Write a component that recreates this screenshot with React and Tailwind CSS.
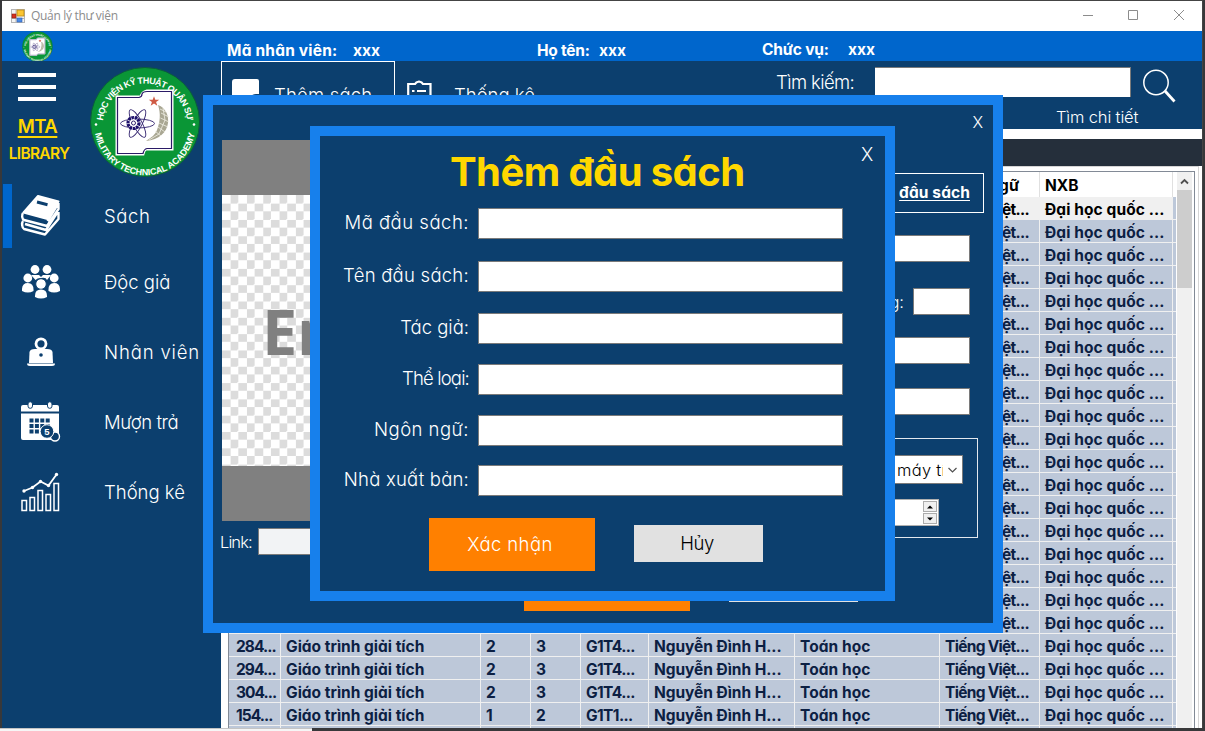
import React from "react";

const GOTHIC = "font-['Inter','Open_Sans',sans-serif] [font-feature-settings:'cv11','ss03']";

const GRID =
  "grid grid-cols-[52px_200px_50px_50px_68px_146px_145px_100px_133px_3px] w-[947px]";

const TRACKS = [
  "tracking-[-0.95px]",
  "tracking-[0px]",
  "",
  "",
  "tracking-[-0.6px]",
  "tracking-[-0.05px]",
  "tracking-[0.05px]",
  "tracking-[-0.7px]",
  "tracking-[0.1px]",
];

const VISIBLE_ROWS = [
  ["284...", "Giáo trình giải tích", "2", "3", "G1T4...", "Nguyễn Đình H...", "Toán học"],
  ["294...", "Giáo trình giải tích", "2", "3", "G1T4...", "Nguyễn Đình H...", "Toán học"],
  ["304...", "Giáo trình giải tích", "2", "3", "G1T4...", "Nguyễn Đình H...", "Toán học"],
  ["154...", "Giáo trình giải tích", "1", "2", "G1T1...", "Nguyễn Đình H...", "Toán học"],
];
const EMPTY_ROW = ["", "", "", "", "", "", ""];
const LANGUAGE_AND_PUBLISHER = ["Tiếng Việt...", "Đại học quốc ..."];
const ROWS = [
  ...[...Array(19).fill(EMPTY_ROW), ...VISIBLE_ROWS].map((row) => [...row, ...LANGUAGE_AND_PUBLISHER]),
  [...EMPTY_ROW, "", ""],
];

function TitleBar() {
  return (
    <div className="flex h-[30px] shrink-0 items-center bg-white pl-[9px]">
      <svg width="14" height="14" viewBox="0 0 14 14">
        <rect x="0.5" y="0.5" width="13" height="13" fill="#f4f4f4" stroke="#b5b5b5" />
        <path d="M5 0V14M0 9.5H14" stroke="#b5b5b5" />
        <rect x="1" y="5" width="4" height="4" fill="#d6301e" stroke="#8d1a10" strokeWidth=".6" />
        <rect x="6" y="1" width="7" height="6" fill="#fbc531" stroke="#b98712" strokeWidth=".8" />
        <rect x="6" y="9" width="5" height="4" fill="#4a8be8" stroke="#2e5fae" strokeWidth=".6" />
      </svg>
      <span className="ml-[6px] font-['Open_Sans',sans-serif] text-[12px] leading-4 tracking-[-0.32px] text-[#8c8c8c]">
        Quản lý thư viện
      </span>
      <svg className="ml-auto" width="120" height="30" viewBox="0 0 120 30" fill="none" stroke="#8c8c8c">
        <path d="M1 14.5H11M46.5 9.5H55.5V18.5H46.5ZM92 9L102 19M102 9L92 19" />
      </svg>
    </div>
  );
}

function Emblem({ size, className }) {
  return (
    <svg className={className} width={size} height={size} viewBox="0 0 112 112">
      <defs>
        <path id="arcTop" d="M13.5 60A42.5 42.5 0 1 1 98.5 60" />
        <path id="arcBottom" d="M5.6 62A50.5 50.5 0 0 0 106.4 62" />
      </defs>
      <circle cx="56" cy="56" r="54.500" fill="#0a9636" stroke="#0b5c3c" strokeWidth="1" />
      <g fill="#fff" fontFamily="Liberation Sans, sans-serif" fontWeight="700" fontSize="9">
        <text>
          <textPath href="#arcTop" startOffset="50%" textAnchor="middle" textLength="123">
            HỌC VIỆN KỸ THUẬT QUÂN SỰ
          </textPath>
        </text>
        <text>
          <textPath href="#arcBottom" startOffset="50%" textAnchor="middle" textLength="141">
            MILITARY TECHNICAL ACADEMY
          </textPath>
        </text>
      </g>
      <circle cx="7" cy="58.500" r="1.300" fill="#fff" />
      <circle cx="105" cy="58.500" r="1.300" fill="#fff" />
      <path
        d="M28 31H52Q53 26 58 25H83V83H57Q55 84 54 88H28Z"
        fill="#fff"
        stroke="#fff"
        strokeWidth="3"
      />
      <path d="M28.5 31.5H50Q53 31 53 28Q54 25.500 58 25.500H82.500V82.500H58Q55 83 54 87.500H28.500Z" fill="#fff" stroke="#2a1a66" strokeWidth="1.2" />
      <g fill="none" stroke="#33246f" strokeWidth="0.9">
        <ellipse cx="48.500" cy="57.500" rx="17" ry="4.500" />
        <ellipse cx="48.500" cy="57.500" rx="15.500" ry="4.500" transform="rotate(62 48.500 57.500)" />
        <ellipse cx="48.500" cy="57.500" rx="15.500" ry="4.500" transform="rotate(-62 48.500 57.500)" />
      </g>
      <circle cx="44.500" cy="57" r="5.500" fill="#fff" stroke="#1d0f6b" strokeWidth="3.200" strokeDasharray="2.600 0.700" />
      <circle cx="44.500" cy="57" r="2" fill="none" stroke="#33246f" />
      <path
        d="M65 30.200L66.300 33.800H70.200L67.100 36.100L68.300 39.800L65 37.600L61.700 39.800L62.900 36.100L59.800 33.800H63.700Z"
        fill="#cf5a44"
      />
      <path
        d="M69 39C77 42 80 50 79 57C78 66 70 74 57 75C63 71 66 69 68 64C71 56 72 48 69 39Z"
        fill="#a9a793"
      />
      <path
        d="M71 43L77 46M72 47L80 51M71.500 52L80 56M70 57L79 61M69 61L76 66M66 65L72 70M74 42L76 54L70 68L60 74"
        fill="none"
        stroke="#f1f0e6"
        strokeWidth=".8"
      />
    </svg>
  );
}

function InfoBar() {
  return (
    <div className={`${GOTHIC} flex h-[30px] shrink-0 items-center bg-[#0066cc] text-[15.500px] font-bold leading-5 text-white`}>
      <Emblem size={31} className="ml-5 shrink-0" />
      <span className="ml-[174px] w-[126px] whitespace-nowrap pt-[9px] tracking-[0.2px]">Mã nhân viên:</span>
      <span className="w-[184px] pt-[9px]">xxx</span>
      <span className="w-[62px] whitespace-nowrap pt-[9px] tracking-[-0.25px]">Họ tên:</span>
      <span className="w-[163px] pt-[9px]">xxx</span>
      <span className="w-[86px] whitespace-nowrap pt-[7px] tracking-[-0.2px]">Chức vụ:</span>
      <span className="pt-[7px]">xxx</span>
    </div>
  );
}

function BooksIcon() {
  return (
    <svg width="42" height="42" viewBox="0 0 42 42">
      <path d="M18 1L38.500 6.500L27.500 24L3.500 17.500Z" fill="#fff" stroke="#fff" strokeWidth="2" strokeLinejoin="round" />
      <path d="M17 7L27.500 9.800" stroke="#0c3f6e" strokeWidth="3" />
      <path
        d="M3 18C1.500 20 2 24 4 25L27 31L38.500 14V8M27.500 26L38 9M3 26C1.500 28 2 33 4 34L25 39.500L38.500 24V17M5 29L26 35L37 18"
        fill="none"
        stroke="#fff"
        strokeWidth="2.400"
        strokeLinejoin="round"
      />
    </svg>
  );
}

function PeopleIcon() {
  return (
    <svg width="38" height="34" viewBox="0 0 38 34" fill="#fff">
      <circle cx="13" cy="4.500" r="4.400" />
      <circle cx="25" cy="4.500" r="4.400" />
      <path d="M9 10H17L19 12L21 10H29L25 15Q24 12 19 13Q15 13 13.500 15Z" />
      <circle cx="5.800" cy="13" r="4.400" />
      <circle cx="32.200" cy="13" r="4.400" />
      <path d="M0 26Q-.5 18 5.800 18Q12 18 11.500 26Q6 29 0 26ZM26.500 26Q26 18 32.200 18Q38.500 18 38 26Q32 29 26.500 26Z" />
      <circle cx="19" cy="19" r="5.300" fill="#fff" stroke="#0c3f6e" strokeWidth="1" />
      <path d="M13 32Q12.500 24.500 19 24.500Q25.500 24.500 25 32Q19 35 13 32Z" />
    </svg>
  );
}

function StaffIcon() {
  return (
    <svg width="28" height="30" viewBox="0 0 28 30">
      <circle cx="14" cy="6.800" r="5" fill="none" stroke="#fff" strokeWidth="2.800" />
      <path d="M2 26L2.500 15Q3 12 8 12H20Q25 12 25.500 15L26 26Z" fill="#fff" />
      <path d="M0 26.500H28Q28 29 25 29H3Q0 29 0 26.500Z" fill="#fff" />
      <circle cx="14" cy="18" r="1.800" fill="#0c3f6e" />
    </svg>
  );
}

function CalendarIcon() {
  return (
    <svg width="40" height="42" viewBox="0 0 40 42">
      <path d="M2 4H36Q38 4 38 6V10.500H0V6Q0 4 2 4ZM0 12.500H38V37Q38 39 36 39H2Q0 39 0 37Z" fill="#fff" />
      <g fill="#fff" stroke="#0c3f6e">
        <rect x="7" y=".8" width="4.500" height="6.500" rx="2.200" />
        <rect x="26.500" y=".8" width="4.500" height="6.500" rx="2.200" />
      </g>
      <path d="M8.500 19.500H30M8.500 25H30M8.500 30.500H22" stroke="#0c3f6e" strokeWidth="4" strokeDasharray="4 1.400" />
      <circle cx="34" cy="35.500" r="4.500" fill="#0c3f6e" stroke="#fff" strokeWidth="1.400" />
      <circle cx="26" cy="30.500" r="6.800" fill="#0c3f6e" stroke="#fff" strokeWidth="1" />
      <text x="26" y="34" textAnchor="middle" fontSize="9.500" fontWeight="700" fontFamily="Liberation Sans, sans-serif" fill="#fff">
        5
      </text>
    </svg>
  );
}

function ChartIcon() {
  return (
    <svg width="40" height="40" viewBox="0 0 40 40" fill="none" stroke="#fff" strokeWidth="1.500">
      <path d="M1 28.500H5.500V38.500H1ZM9 25.500H13.500V38.500H9ZM17 18.500H21.500V38.500H17ZM25 22.500H29.500V38.500H25ZM33 11.500H37.500V38.500H33Z" />
      <path d="M3 19L11.500 15.500L19.500 9.500L27.500 13.500L35.500 2.500" strokeWidth="1.800" />
      <g fill="#fff" stroke="none">
        <circle cx="3" cy="19" r="1.700" />
        <circle cx="11.500" cy="15.500" r="1.700" />
        <circle cx="19.500" cy="9.500" r="1.700" />
        <circle cx="27.500" cy="13.500" r="1.700" />
        <circle cx="35.500" cy="2.500" r="1.700" />
      </g>
    </svg>
  );
}

function NavItem({ icon, label, active, className, track }) {
  return (
    <div className={`flex items-center ${className}`}>
      <div className={`ml-px h-16 w-[9px] shrink-0 ${active ? "bg-[#0066cc]" : ""}`} />
      <div className="flex w-[58px] shrink-0 justify-center">{icon}</div>
      <span className={`ml-[34px] whitespace-nowrap text-[18.500px] font-light leading-6 text-white ${track}`}>{label}</span>
    </div>
  );
}

function Sidebar() {
  return (
    <div className={`${GOTHIC} flex w-[219px] shrink-0 flex-col bg-[#0c3f6e]`}>
      <div className="flex h-[123px] shrink-0">
        <div className="flex w-[70px] flex-col items-center">
          <div className="mt-[12px] flex w-[38px] flex-col gap-2">
            <div className="h-[4px] bg-white" />
            <div className="h-[4px] bg-white" />
            <div className="h-[4px] bg-white" />
          </div>
          <div className="ml-px mt-[13px] text-[18.500px] font-semibold leading-6 tracking-[-0.5px] text-[#ffd700] underline decoration-2 underline-offset-[3px]">
            MTA
          </div>
          <div className="ml-[4px] mt-[6px] text-[15.500px] font-semibold leading-5 tracking-[-0.7px] text-[#ffd700]">LIBRARY</div>
        </div>
        <Emblem size={112} className="ml-[17px] mt-[5px] shrink-0" />
      </div>
      <NavItem active icon={<BooksIcon />} label="Sách" className="h-16" track="tracking-[0.6px]" />
      <NavItem icon={<PeopleIcon />} label="Độc giả" className="mt-[1px] h-[66px]" track="" />
      <NavItem icon={<StaffIcon />} label="Nhân viên" className="mt-[4px] h-[66px]" track="tracking-[0.85px]" />
      <NavItem icon={<CalendarIcon />} label="Mượn trả" className="mt-[4px] h-[66px]" track="tracking-[-0.4px]" />
      <NavItem icon={<ChartIcon />} label="Thống kê" className="mt-[4px] h-[66px]" track="" />
    </div>
  );
}

function Toolbar() {
  return (
    <div className={`${GOTHIC} flex h-[68px] shrink-0 bg-[#0c3f6e] font-light text-white`}>
      <div className="flex h-[68px] w-[174px] border border-white pl-[10px] pt-[17px]">
        <svg width="28" height="30" viewBox="0 0 28 30">
          <path d="M3 0H25Q27 0 27 2V15H24Q20 15 19 18V28H0V3Q0 0 3 0Z" fill="#fff" />
        </svg>
        <span className="ml-[14px] mt-[4px] text-[18.500px] leading-6 tracking-[0.2px]">Thêm sách</span>
      </div>
      <div className="flex w-[374px] pl-[12px] pt-[19px]">
        <svg width="26" height="30" viewBox="0 0 26 30" fill="none" stroke="#fff" strokeWidth="2.200">
          <path d="M1.200 28V4H8Q9 2 12 1.500Q15 2 16 4H23.500V28Z" />
          <path d="M5 11H7.500M10 11H19M5 17H7.500M10 17H19" />
        </svg>
        <span className="ml-[21px] mt-[3px] text-[18.500px] leading-6">Thống kê</span>
      </div>
      <div className="flex">
        <span className="ml-[7px] mt-[9px] w-[99px] text-[18.500px] leading-6 tracking-[-0.6px]">Tìm kiếm:</span>
        <div>
          <div className="mt-[6px] flex">
            <div className="h-[30px] w-[256px] border-r border-t border-[#7a7a7a] bg-white" />
            <svg className="ml-[11px] mt-[1px]" width="36" height="36" viewBox="0 0 36 36" fill="none" stroke="#fff">
              <circle cx="14" cy="14.500" r="12.200" strokeWidth="1.500" />
              <path d="M23 23L32.500 33.500" strokeWidth="2.800" />
            </svg>
          </div>
          <div className="ml-[181px] mt-[1px] text-[16.500px] leading-6 tracking-[-0.15px]">Tìm chi tiết</div>
        </div>
      </div>
    </div>
  );
}

function BookTable() {
  return (
    <div className={`${GOTHIC} ml-[7px] mt-[4px] flex h-[600px] w-[967px] border border-[#828a96] bg-white text-[15.500px] font-bold`}>
      <div className="shrink-0">
        <div className={`${GRID} h-[25px] bg-white leading-[27px] text-black`}>
          <div className="border-r border-[#e0e0e0]" />
          <div className="border-r border-[#e0e0e0]" />
          <div className="border-r border-[#e0e0e0]" />
          <div className="border-r border-[#e0e0e0]" />
          <div className="border-r border-[#e0e0e0]" />
          <div className="border-r border-[#e0e0e0]" />
          <div className="border-r border-[#e0e0e0]" />
          <div className="h-[25px] border-r border-[#e0e0e0] pl-[5px]">Ngôn ngữ</div>
          <div className="h-[25px] border-r border-[#e0e0e0] pl-[5px]">NXB</div>
        </div>
        {ROWS.map((row, r) => (
          <div key={r} className={`${GRID} h-[23px] ${r === 0 ? "bg-[#f0f0f0] text-black" : "bg-[#bdc8d9] text-[#0c2043]"}`}>
            {row.map((cell, c) => (
              <div
                key={c}
                className={`h-[23px] whitespace-nowrap border-b border-r border-[#f0f0f0] leading-[25px] ${c === 0 ? "pl-[7px]" : "pl-[5px]"} ${TRACKS[c]}`}
              >
                {cell}
              </div>
            ))}
            <div className="h-[23px] border-b border-[#f0f0f0] bg-[#bdc8d9]" />
          </div>
        ))}
      </div>
      <div className="ml-px w-[15px] bg-[#f0f0f0]">
        <svg width="15" height="18" viewBox="0 0 15 18" fill="none" stroke="#505050" strokeWidth="1.800">
          <path d="M4 11.500L7.500 8L11 11.500" />
        </svg>
        <div className="h-[98px] bg-[#cdcdcd]" />
      </div>
    </div>
  );
}

function Field({ label, className, track }) {
  return (
    <div className={`flex h-[31px] ${className}`}>
      <div className="mr-[9px] flex w-[149px] justify-end">
        <span className={`whitespace-nowrap text-[18.500px] font-light leading-[28px] text-white ${track}`}>{label}</span>
      </div>
      <div className="w-[365px] border border-[#7a7a7a] bg-white" />
    </div>
  );
}

function AddBookDialog() {
  return (
    <div className={`${GOTHIC} absolute left-[203px] top-[95px] flex h-[538px] w-[800px] flex-col border-[10px] border-[#1780ec] bg-[#0c3f6e] text-white`}>
      <div className="flex h-[35px] justify-end pr-[10px] pt-[7px] text-[16px] font-light leading-5">X</div>
      <div className="flex justify-between pl-[9px]">
        <div>
          <div className="h-[381px] w-[280px] bg-[#808080] pt-[55px]">
            <div className="h-[271px] bg-[conic-gradient(#dcdcdc_25%,#fff_0_50%,#dcdcdc_0_75%,#fff_0)] bg-[length:16.320px_16.320px] pl-[40px] pt-[91px] font-['Noto_Sans',sans-serif] text-[63px] font-bold leading-[90px] text-[#808080]">
              Em
            </div>
          </div>
          <div className="mt-[7px] flex h-[27px]">
            <span className="-ml-[2px] w-[38px] whitespace-nowrap text-[16.500px] font-light leading-[28px] tracking-[-0.9px]">Link:</span>
            <div className="w-[200px] border border-[#7a7a7a] bg-[#f2f3f5]" />
          </div>
        </div>
        <div className="mt-[33px] flex w-[220px] flex-col items-end pr-[9px]">
          <div className="h-[40px] w-[200px] whitespace-nowrap border border-white pr-[13px] text-right text-[15.500px] font-bold leading-[38px] tracking-[0.1px] underline decoration-1 underline-offset-[2px]">
            đầu sách
          </div>
          <div className="mr-[14px] mt-[22px] h-[27px] w-[150px] border border-[#7a7a7a] bg-white" />
          <div className="mr-[14px] mt-[26px] flex h-[27px]">
            <span className="mr-[9px] text-[16.500px] font-light leading-[28px]">g:</span>
            <div className="w-[57px] border border-[#7a7a7a] bg-white" />
          </div>
          <div className="mr-[14px] mt-[22px] h-[27px] w-[150px] border border-[#7a7a7a] bg-white" />
          <div className="mr-[14px] mt-[24px] h-[27px] w-[150px] border border-[#7a7a7a] bg-white" />
          <div className="mr-[6px] mt-[23px] flex h-[100px] w-[190px] flex-col items-end border border-[#e3e8ee] pr-[14px] pt-[16px]">
            <div className="flex h-[29px] w-[130px] items-center border border-[#7a7a7a] bg-white">
              <span className="ml-[63px] w-[46px] overflow-hidden whitespace-nowrap text-[16.500px] font-light leading-6 tracking-[0.3px] text-black">
                máy tính
              </span>
              <svg className="ml-[4px]" width="11" height="8" viewBox="0 0 11 8" fill="none" stroke="#505050" strokeWidth="1.200">
                <path d="M1.500 2L5.500 6L9.500 2" />
              </svg>
            </div>
            <div className="mr-[24px] mt-[15px] flex h-[27px] w-[100px] justify-end border border-[#b0b0b0] bg-white p-px">
              <div className="flex w-[14px] flex-col">
                <div className="flex h-[11px] items-center justify-center border border-[#acacac] bg-[#f0f0f0]">
                  <svg width="6" height="4" viewBox="0 0 6 4"><path d="M0 3.500L3 .5L6 3.500Z" fill="#000" /></svg>
                </div>
                <div className="mt-px flex h-[11px] items-center justify-center border border-[#acacac] bg-[#f0f0f0]">
                  <svg width="6" height="4" viewBox="0 0 6 4"><path d="M0 .5L3 3.500L6 .5Z" fill="#000" /></svg>
                </div>
              </div>
            </div>
          </div>
        </div>
      </div>
      <div className="absolute left-[311px] top-[453px] h-[53px] w-[166px] bg-[#ff8000]" />
      <div className="absolute left-[516px] top-[460px] h-[37px] w-[129px] bg-[#e1e1e1]" />
    </div>
  );
}

function AddTitleDialog() {
  return (
    <div className={`${GOTHIC} absolute left-[310px] top-[126px] flex h-[475px] w-[585px] flex-col border-[10px] border-[#1780ec] bg-[#0c3f6e] text-white`}>
      <div className="flex h-[72px]">
        <h1 className="ml-[130px] mt-[12px] w-[411px] whitespace-nowrap text-[40px] font-bold leading-[48px] tracking-[-0.6px] text-[#ffd700]">
          Thêm đầu sách
        </h1>
        <span className="mt-[6px] text-[18.500px] font-light leading-6">X</span>
      </div>
      <Field label="Mã đầu sách:" className="" track="tracking-[0.5px]" />
      <Field label="Tên đầu sách:" className="mt-[22px]" track="tracking-[0.25px]" />
      <Field label="Tác giả:" className="mt-[21px]" track="" />
      <Field label="Thể loại:" className="mt-[20px]" track="tracking-[-0.85px]" />
      <Field label="Ngôn ngữ:" className="mt-[20px]" track="tracking-[0.45px]" />
      <Field label="Nhà xuất bản:" className="mt-[19px]" track="tracking-[0.2px]" />
      <div className="mt-[22px] flex items-start pl-[109px]">
        <button className="h-[53px] w-[166px] bg-[#ff8000] pr-1 text-[18.500px] font-light tracking-[0.4px]">Xác nhận</button>
        <button className="ml-[39px] mt-[7px] h-[37px] w-[129px] bg-[#e1e1e1] pr-[3px] text-[18.500px] font-light tracking-[-0.5px] text-black">
          Hủy
        </button>
      </div>
    </div>
  );
}

export default function App() {
  return (
    <div className="relative h-[731px] w-[1205px] overflow-hidden bg-[#38383a]">
      <div className="ml-[2px] flex h-[728px] w-[1201px] flex-col overflow-hidden border-t border-r border-[#444444] bg-white">
        <TitleBar />
        <InfoBar />
        <div className="flex min-h-0 flex-1">
          <Sidebar />
          <div className="min-w-0 flex-1 bg-white">
            <Toolbar />
            <div className="mt-[10px] h-[27px] bg-[#252f3b]" />
            <div className="mr-[3px] border-r border-t border-[#d5d5d5]">
              <BookTable />
            </div>
          </div>
        </div>
      </div>
      <div className="h-[3px] w-[312px] border-t border-[#c4c4c4] bg-[#f6f6f6]" />
      <AddBookDialog />
      <AddTitleDialog />
    </div>
  );
}
